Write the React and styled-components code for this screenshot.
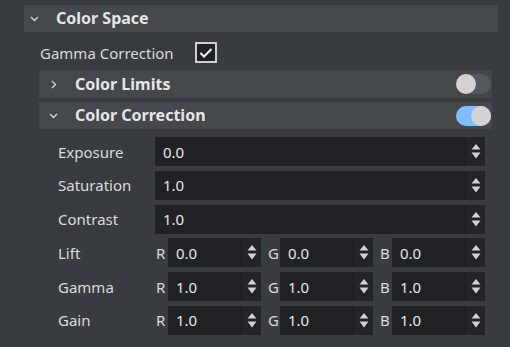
import React from 'react'
import styled, { createGlobalStyle } from 'styled-components'

const GlobalStyle = createGlobalStyle`
    html, body {
        margin: 0;
        padding: 0;
        background: #383b40;
    }
    body {
        font-family: 'Noto Sans', 'Open Sans', sans-serif;
        color: #dedede;
    }
`

const Chevron = ({ open }) => (
    <svg width="9" height="9" viewBox="0 0 9 9">
        {open ? (
            <polyline points="1,3 4.5,6.5 8,3" fill="none" stroke="#d4d4d4" strokeWidth="1.4" />
        ) : (
            <polyline points="3,1 6.5,4.5 3,8" fill="none" stroke="#d4d4d4" strokeWidth="1.4" />
        )}
    </svg>
)

const SpinArrows = () => (
    <svg width="10" height="17" viewBox="0 0 10 17">
        <polygon points="5,1 9.5,6.5 0.5,6.5" fill="#d2d2d2" />
        <polygon points="0.5,9.5 9.5,9.5 5,15.5" fill="#d2d2d2" />
    </svg>
)

const App = () => {
    return (
        <Page>
            <GlobalStyle />
            <Group>
                <GroupHeader>
                    <ChevronBox><Chevron open /></ChevronBox>
                    <GroupTitle>Color Space</GroupTitle>
                </GroupHeader>
                <GroupBody>
                    <CheckRow>
                        <CheckLabel>Gamma Correction</CheckLabel>
                        <Checkbox>
                            <svg width="14" height="12" viewBox="0 0 14 12">
                                <polyline points="1.5,6 5,9.5 12.5,2" fill="none" stroke="#f2f2f2" strokeWidth="2" />
                            </svg>
                        </Checkbox>
                    </CheckRow>

                    <SubHeader $tall>
                        <SubChevron><Chevron /></SubChevron>
                        <GroupTitle>Color Limits</GroupTitle>
                        <Toggle />
                    </SubHeader>

                    <SubHeader>
                        <SubChevron><Chevron open /></SubChevron>
                        <GroupTitle>Color Correction</GroupTitle>
                        <Toggle $on />
                    </SubHeader>

                    <Fields>
                        {[['Exposure', '0.0'], ['Saturation', '1.0'], ['Contrast', '1.0']].map(([name, value]) => (
                            <FieldRow key={name}>
                                <FieldLabel>{name}</FieldLabel>
                                <NumberInput value={value} />
                            </FieldRow>
                        ))}
                        {[['Lift', '0.0'], ['Gamma', '1.0'], ['Gain', '1.0']].map(([name, value]) => (
                            <FieldRow key={name}>
                                <FieldLabel>{name}</FieldLabel>
                                <Channels>
                                    {['R', 'G', 'B'].map((ch) => (
                                        <Channel key={ch}>
                                            <ChannelLabel>{ch}</ChannelLabel>
                                            <NumberInput value={value} />
                                        </Channel>
                                    ))}
                                </Channels>
                            </FieldRow>
                        ))}
                    </Fields>
                </GroupBody>
            </Group>
        </Page>
    )
}

const NumberInput = ({ value }) => (
    <InputBox>
        <InputValue>{value}</InputValue>
        <Spinner><SpinArrows /></Spinner>
    </InputBox>
)

export default App

const Page = styled.div`
    width: 510px;
    height: 347px;
    box-sizing: border-box;
    padding: 5px 12px 0 24px;
    overflow: hidden;
`

const Group = styled.div`
    display: flex;
    flex-direction: column;
`

const GroupHeader = styled.div`
    display: flex;
    align-items: center;
    height: 27px;
    background: #44474c;
    padding-left: 6px;
`

const ChevronBox = styled.div`
    display: flex;
    width: 26px;
`

const SubChevron = styled.div`
    display: flex;
    width: 26px;
    padding-left: 10px;
`

const GroupTitle = styled.div`
    font-size: 16px;
    font-weight: 700;
    color: #e6e6e6;
    flex: 1;
    margin-top: -1px;
`

const GroupBody = styled.div`
    display: flex;
    flex-direction: column;
    padding: 0 6px 0 15px;
`

const CheckRow = styled.div`
    display: flex;
    align-items: center;
    height: 38px;
    box-sizing: border-box;
    padding: 3px 0 0 1px;
`

const CheckLabel = styled.div`
    width: 155px;
    font-size: 15px;
    color: #dcdcdc;
`

const Checkbox = styled.div`
    width: 18px;
    height: 17px;
    border: 2px solid #cfcfcf;
    background: #1f2124;
    display: flex;
    align-items: center;
    justify-content: center;
`

const SubHeader = styled.div`
    display: flex;
    align-items: center;
    height: ${(p) => (p.$tall ? '28px' : '27px')};
    margin-bottom: ${(p) => (p.$tall ? '4px' : '0')};
    background: #44474c;
    padding-right: 1px;
`

const Toggle = styled.div`
    position: relative;
    width: 35px;
    height: 20px;
    border-radius: 10px;
    background: ${(p) => (p.$on ? '#80bdff' : '#55585c')};

    &::after {
        content: '';
        position: absolute;
        top: 0;
        left: ${(p) => (p.$on ? '15px' : '0')};
        width: 20px;
        height: 20px;
        border-radius: 50%;
        background: #d6d2d2;
    }
`

const Fields = styled.div`
    display: flex;
    flex-direction: column;
    gap: 4.8px;
    padding: 8px 7px 0 19px;
`

const FieldRow = styled.div`
    display: grid;
    grid-template-columns: 97px 1fr;
    align-items: center;
    height: 29px;
`

const FieldLabel = styled.div`
    font-size: 15px;
    color: #dcdcdc;
`

const Channels = styled.div`
    display: grid;
    grid-template-columns: repeat(3, 1fr);
    gap: 6px;
    height: 100%;
`

const Channel = styled.div`
    display: flex;
    align-items: center;
    height: 100%;
`

const ChannelLabel = styled.div`
    width: 13px;
    padding-left: 1px;
    box-sizing: border-box;
    font-size: 15px;
    color: #dcdcdc;
`

const InputBox = styled.div`
    flex: 1;
    display: flex;
    height: 100%;
    background: #1f2124;
`

const InputValue = styled.div`
    flex: 1;
    display: flex;
    align-items: center;
    padding-left: 8px;
    font-size: 15px;
    color: #e8e8e8;
`

const Spinner = styled.div`
    width: 19px;
    display: flex;
    align-items: center;
    justify-content: center;
    background: #222428;
    border-left: 1px solid #1a1b1e;
`
